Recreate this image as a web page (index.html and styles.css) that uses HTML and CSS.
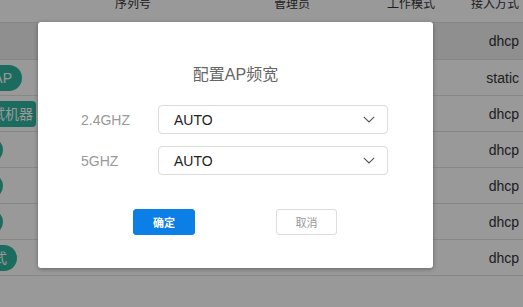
FILE: index.html
```html
<!DOCTYPE html>
<html lang="zh">
<head>
<meta charset="utf-8">
<link rel="stylesheet" href="styles.css">
</head>
<body>
<div class="table">
  <div class="row head">
    <div class="cell c1"></div>
    <div class="cell">序列号</div>
    <div class="cell">管理员</div>
    <div class="cell">工作模式</div>
    <div class="cell last">接入方式</div>
  </div>
  <div class="row hover">
    <div class="cell c1"></div>
    <div class="cell"></div>
    <div class="cell"></div>
    <div class="cell mode">路由模式</div>
    <div class="cell last">dhcp</div>
  </div>
  <div class="row">
    <div class="cell c1"><span class="badge pill r18">无线AP</span></div>
    <div class="cell"></div>
    <div class="cell"></div>
    <div class="cell mode">AP</div>
    <div class="cell last">static</div>
  </div>
  <div class="row">
    <div class="cell c1"><span class="badge square r4">测试机器</span></div>
    <div class="cell"></div>
    <div class="cell"></div>
    <div class="cell mode">路由模式</div>
    <div class="cell last">dhcp</div>
  </div>
  <div class="row">
    <div class="cell c1"><span class="badge pill r37">路由器</span></div>
    <div class="cell"></div>
    <div class="cell"></div>
    <div class="cell mode">路由模式</div>
    <div class="cell last">dhcp</div>
  </div>
  <div class="row">
    <div class="cell c1"><span class="badge pill r37">路由器</span></div>
    <div class="cell"></div>
    <div class="cell"></div>
    <div class="cell mode">路由模式</div>
    <div class="cell last">dhcp</div>
  </div>
  <div class="row">
    <div class="cell c1"><span class="badge pill r37">路由器</span></div>
    <div class="cell"></div>
    <div class="cell"></div>
    <div class="cell mode">路由模式</div>
    <div class="cell last">dhcp</div>
  </div>
  <div class="row">
    <div class="cell c1"><span class="badge pill r23">桥接模式</span></div>
    <div class="cell"></div>
    <div class="cell"></div>
    <div class="cell mode">路由模式</div>
    <div class="cell last">dhcp</div>
  </div>
</div>

<div class="overlay"></div>

<div class="modal">
  <div class="title">配置AP频宽</div>
  <div class="form">
    <div class="label">2.4GHZ</div>
    <div class="select"><span>AUTO</span>
      <svg class="chev" width="12" height="7" viewBox="0 0 12 7"><polyline points="0.8,0.8 6,6 11.2,0.8" fill="none" stroke="#555" stroke-width="1.1"/></svg>
    </div>
    <div class="label">5GHZ</div>
    <div class="select"><span>AUTO</span>
      <svg class="chev" width="12" height="7" viewBox="0 0 12 7"><polyline points="0.8,0.8 6,6 11.2,0.8" fill="none" stroke="#555" stroke-width="1.1"/></svg>
    </div>
  </div>
  <div class="buttons">
    <button class="btn ok">确定</button>
    <button class="btn cancel">取消</button>
  </div>
</div>
</body>
</html>
```

FILE: styles.css
```css
html, body {
  margin: 0;
  padding: 0;
  background: #fff;
  width: 523px;
  height: 307px;
  overflow: hidden;
  font-family: "Liberation Sans", "Noto Sans CJK SC", sans-serif;
  color: #333;
}

.table {
  margin-top: -17px;
}

.row {
  display: grid;
  grid-template-columns: 40px 186px 132px 106px 1fr;
  height: 35px;
  border-bottom: 1px solid #e2e2e2;
  align-items: center;
  font-size: 14px;
}

.row.head {
  height: 39px;
  font-size: 12px;
  color: #333;
}

.row.hover {
  height: 36px;
  background: #eeeeee;
}

.cell {
  text-align: center;
  white-space: nowrap;
  overflow: visible;
}

.cell.mode {
  font-size: 12px;
  padding-right: 5px;
}

.cell.last {
  text-align: right;
  padding-right: 4px;
}

.cell.c1 {
  display: flex;
  justify-content: flex-end;
  overflow: hidden;
  height: 100%;
  align-items: center;
}

.badge {
  flex: none;
  height: 26px;
  line-height: 26px;
  background: #2fb39e;
  color: #fff;
  font-size: 14px;
  padding: 0 10px;
}

.badge.pill { border-radius: 13px; }
.badge.square { border-radius: 4px; padding: 0 3px 0 8px; }
.r18 { margin-right: 18px; }
.r4 { margin-right: 4px; }
.r37 { margin-right: 37px; }
.r23 { margin-right: 23px; }

.overlay {
  position: absolute;
  inset: 0;
  background: rgba(0, 0, 0, 0.4);
}

.modal {
  position: absolute;
  left: 38px;
  top: 22px;
  width: 395px;
  height: 246px;
  background: #fff;
  border-radius: 3px;
  box-shadow: 0 1px 4px rgba(0, 0, 0, 0.35);
  box-sizing: border-box;
  padding-top: 42px;
}

.title {
  text-align: center;
  font-size: 16px;
  line-height: 22px;
  color: #666;
}

.form {
  margin-top: 19px;
  padding-left: 43px;
  display: grid;
  grid-template-columns: 77px 230px;
  grid-auto-rows: 29px;
  row-gap: 12px;
  align-items: center;
}

.label {
  font-size: 14px;
  color: #999;
}

.select {
  height: 29px;
  box-sizing: border-box;
  border: 1px solid #dcdcdc;
  border-radius: 4px;
  display: flex;
  align-items: center;
  justify-content: space-between;
  padding: 0 12px 0 15px;
  font-size: 14px;
  color: #222;
}

.chev { display: block; }

.buttons {
  margin-top: 34px;
  padding-left: 95px;
  display: flex;
  gap: 81px;
}

.btn {
  height: 26px;
  box-sizing: border-box;
  border-radius: 3px;
  font-family: "Noto Sans CJK SC", sans-serif;
  font-size: 11px;
  padding: 0;
  cursor: pointer;
}

.btn.ok {
  width: 62px;
  background: #0b7fe6;
  border: 1px solid #0b7fe6;
  color: #fff;
  font-weight: bold;
}

.btn.cancel {
  width: 61px;
  background: #fff;
  border: 1px solid #dcdcdc;
  color: #999;
}
```
